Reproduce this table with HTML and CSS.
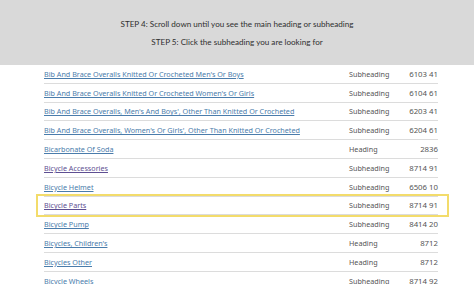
FILE: index.html
```html
<!DOCTYPE html>
<html>
<head>
<meta charset="utf-8">
<link rel="stylesheet" href="styles.css">
</head>
<body>
<div class="banner">
  <p>STEP 4: Scroll down until you see the main heading or subheading</p>
  <p>STEP 5: Click the subheading you are looking for</p>
</div>
<div class="table">
  <div class="row"><a class="link">Bib And Brace Overalls Knitted Or Crocheted Men's Or Boys</a><span class="type">Subheading</span><span class="code">6103 41</span></div>
  <div class="row"><a class="link">Bib And Brace Overalls Knitted Or Crocheted Women's Or Girls</a><span class="type">Subheading</span><span class="code">6104 61</span></div>
  <div class="row"><a class="link">Bib And Brace Overalls, Men's And Boys', Other Than Knitted Or Crocheted</a><span class="type">Subheading</span><span class="code">6203 41</span></div>
  <div class="row"><a class="link">Bib And Brace Overalls, Women's Or Girls', Other Than Knitted Or Crocheted</a><span class="type">Subheading</span><span class="code">6204 61</span></div>
  <div class="row"><a class="link">Bicarbonate Of Soda</a><span class="type">Heading</span><span class="code">2836</span></div>
  <div class="row"><a class="link visited">Bicycle Accessories</a><span class="type">Subheading</span><span class="code">8714 91</span></div>
  <div class="row"><a class="link">Bicycle Helmet</a><span class="type">Subheading</span><span class="code">6506 10</span></div>
  <div class="row highlight"><a class="link visited">Bicycle Parts</a><span class="type">Subheading</span><span class="code">8714 91</span></div>
  <div class="row"><a class="link">Bicycle Pump</a><span class="type">Subheading</span><span class="code">8414 20</span></div>
  <div class="row"><a class="link">Bicycles, Children's</a><span class="type">Heading</span><span class="code">8712</span></div>
  <div class="row"><a class="link">Bicycles Other</a><span class="type">Heading</span><span class="code">8712</span></div>
  <div class="row"><a class="link">Bicycle Wheels</a><span class="type">Subheading</span><span class="code">8714 92</span></div>
</div>
</body>
</html>
```
FILE: styles.css
```css
html, body {
  margin: 0;
  padding: 0;
  background: #fff;
}
body {
  width: 474px;
  height: 284px;
  overflow: hidden;
}
.banner {
  background: #d9d9d9;
  height: 65px;
  box-sizing: border-box;
  padding-top: 15px;
  text-align: center;
  font-family: Lato, "Liberation Sans", sans-serif;
  font-size: 8.1px;
  color: #2f2f2f;
}
.banner p {
  margin: 0;
  line-height: 18px;
}
.table {
  margin-left: 44px;
  width: 394px;
  font-family: "Noto Sans", "Liberation Sans", sans-serif;
  font-size: 7.2px;
}
.row {
  display: grid;
  grid-template-columns: 305px 50px 39px;
  align-items: center;
  height: 18.8px;
  box-sizing: border-box;
  border-bottom: 1px solid #dcdcdc;
  position: relative;
}
.link {
  color: #4a7cab;
  text-decoration: underline;
  text-underline-offset: 1px;
  white-space: nowrap;
  overflow: hidden;
}
.link.visited {
  color: #5e4f92;
}
.type {
  color: #555;
}
.code {
  color: #555;
  text-align: right;
  font-size: 7.8px;
}
.highlight::after {
  content: "";
  position: absolute;
  top: -3px;
  bottom: -3px;
  left: -8px;
  right: -11px;
  border: 2px solid #f3dc6b;
  pointer-events: none;
}
```
